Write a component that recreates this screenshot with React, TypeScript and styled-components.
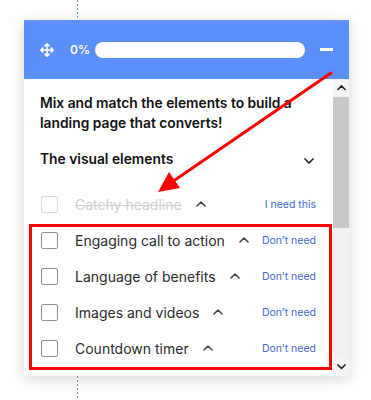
import styled, { createGlobalStyle } from "styled-components";
import { FaArrowsAlt } from "react-icons/fa";

const GlobalStyle = createGlobalStyle`
  body {
    margin: 0;
    font-family: Inter, "Noto Sans", sans-serif;
    background: #ffffff;
  }
`;

const Page = styled.div`
  position: relative;
  width: 371px;
  height: 400px;
  overflow: hidden;
  padding: 20px 0 0 24px;
  box-sizing: border-box;
  background: repeating-linear-gradient(
      to bottom,
      #6f95ea 0 2px,
      transparent 2px 4px
    )
    no-repeat 77px 0 / 1px 100%;
`;

const Panel = styled.div`
  width: 325px;
  height: 356px;
  display: flex;
  flex-direction: column;
  background: #fff;
  box-shadow: 0 3px 14px rgba(0, 0, 0, 0.16);
`;

const Header = styled.header`
  height: 59px;
  flex-shrink: 0;
  background: #5b8ff9;
  display: flex;
  align-items: center;
  padding: 0 16px;
  color: #fff;
`;

const Percent = styled.span`
  margin-left: 16px;
  font-size: 12px;
  font-weight: 600;
`;

const Progress = styled.div`
  margin-left: 5px;
  width: 210px;
  height: 16px;
  border-radius: 8px;
  background: #fff;
`;

const Minus = styled.div`
  margin-left: auto;
  width: 13px;
  height: 2.5px;
  background: #fff;
`;

const Body = styled.div`
  flex: 1;
  display: flex;
  min-height: 0;
`;

const Content = styled.div`
  flex: 1;
  overflow: hidden;
  padding: 14px 17px 0 16px;
`;

const Intro = styled.h2`
  margin: 0;
  font-size: 13.8px;
  line-height: 20px;
  font-weight: 600;
  color: #111;
`;

const Section = styled.div`
  margin-top: 10px;
  height: 32px;
  display: flex;
  align-items: center;
  justify-content: space-between;
  font-size: 13.8px;
  font-weight: 600;
  color: #111;
`;

const List = styled.ul`
  list-style: none;
  margin: 11px 0 0;
  padding: 0;
`;

const Row = styled.li`
  height: 36px;
  display: flex;
  align-items: center;
`;

const Box = styled.span<{ $muted?: boolean }>`
  width: 17px;
  height: 17px;
  margin-left: 1px;
  box-sizing: border-box;
  border: 1.5px solid ${(p) => (p.$muted ? "#d9d9d9" : "#8e8e8e")};
  border-radius: 2px;
  flex-shrink: 0;
`;

const Label = styled.span<{ $muted?: boolean }>`
  margin-left: 17px;
  font-size: 14px;
  color: ${(p) => (p.$muted ? "#cfcfcf" : "#2b2b2b")};
  text-decoration: ${(p) => (p.$muted ? "line-through" : "none")};
  white-space: nowrap;
`;

const Caret = styled.svg`
  margin-left: 14px;
  flex-shrink: 0;
`;

const Action = styled.span`
  margin-left: auto;
  font-size: 10.5px;
  color: #3f69cf;
  white-space: nowrap;
`;

const Scrollbar = styled.div`
  width: 16px;
  flex-shrink: 0;
  display: flex;
  flex-direction: column;
  background: #f1f1f1;
`;

const ScrollButton = styled.div`
  height: 18px;
  display: flex;
  align-items: center;
  justify-content: center;
  background: #f4f4f4;
`;

const Thumb = styled.div`
  height: 131px;
  background: #c8c8c8;
`;

const Track = styled.div`
  flex: 1;
`;

const Highlight = styled.div`
  position: absolute;
  left: 29px;
  top: 224px;
  width: 303px;
  height: 146px;
  box-sizing: border-box;
  border: 3px solid #f00;
  pointer-events: none;
`;

const Overlay = styled.svg`
  position: absolute;
  left: 0;
  top: 0;
  pointer-events: none;
`;

const Chevron = ({ up, size = 10, color = "#333" }: { up?: boolean; size?: number; color?: string }) => (
  <svg width={size} height={size * 0.6} viewBox="0 0 10 6">
    <path
      d={up ? "M1 5 L5 1 L9 5" : "M1 1 L5 5 L9 1"}
      fill="none"
      stroke={color}
      strokeWidth="1.7"
      strokeLinecap="round"
      strokeLinejoin="round"
    />
  </svg>
);

const items = [
  { label: "Catchy headline", done: true },
  { label: "Engaging call to action" },
  { label: "Language of benefits" },
  { label: "Images and videos" },
  { label: "Countdown timer" },
];

function App() {
  return (
    <>
      <GlobalStyle />
      <Page>
        <Panel>
          <Header>
            <FaArrowsAlt size={14} />
            <Percent>0%</Percent>
            <Progress />
            <Minus />
          </Header>
          <Body>
            <Content>
              <Intro>Mix and match the elements to build a landing page that converts!</Intro>
              <Section>
                The visual elements
                <span style={{ marginRight: 2 }}>
                  <Chevron size={10} color="#222" />
                </span>
              </Section>
              <List>
                {items.map((item) => (
                  <Row key={item.label}>
                    <Box $muted={item.done} />
                    <Label $muted={item.done}>{item.label}</Label>
                    <Caret width="10" height="6" viewBox="0 0 10 6">
                      <path
                        d="M1 5 L5 1 L9 5"
                        fill="none"
                        stroke="#444"
                        strokeWidth="1.6"
                        strokeLinecap="round"
                        strokeLinejoin="round"
                      />
                    </Caret>
                    <Action>{item.done ? "I need this" : "Don’t need"}</Action>
                  </Row>
                ))}
                {/* next item, only its checkbox peeks above the fold */}
                <Row>
                  <Box />
                </Row>
              </List>
            </Content>
            <Scrollbar>
              <ScrollButton>
                <Chevron up size={9} color="#222" />
              </ScrollButton>
              <Thumb />
              <Track />
              <ScrollButton>
                <Chevron size={9} color="#222" />
              </ScrollButton>
            </Scrollbar>
          </Body>
        </Panel>
        <Highlight />
        <Overlay width="371" height="400" viewBox="0 0 371 400">
          <line x1="331" y1="73" x2="172" y2="182" stroke="#f00" strokeWidth="3" strokeLinecap="round" />
          <polygon points="158,192 180,188 169,172" fill="#f00" />
        </Overlay>
      </Page>
    </>
  );
}

export default App;
